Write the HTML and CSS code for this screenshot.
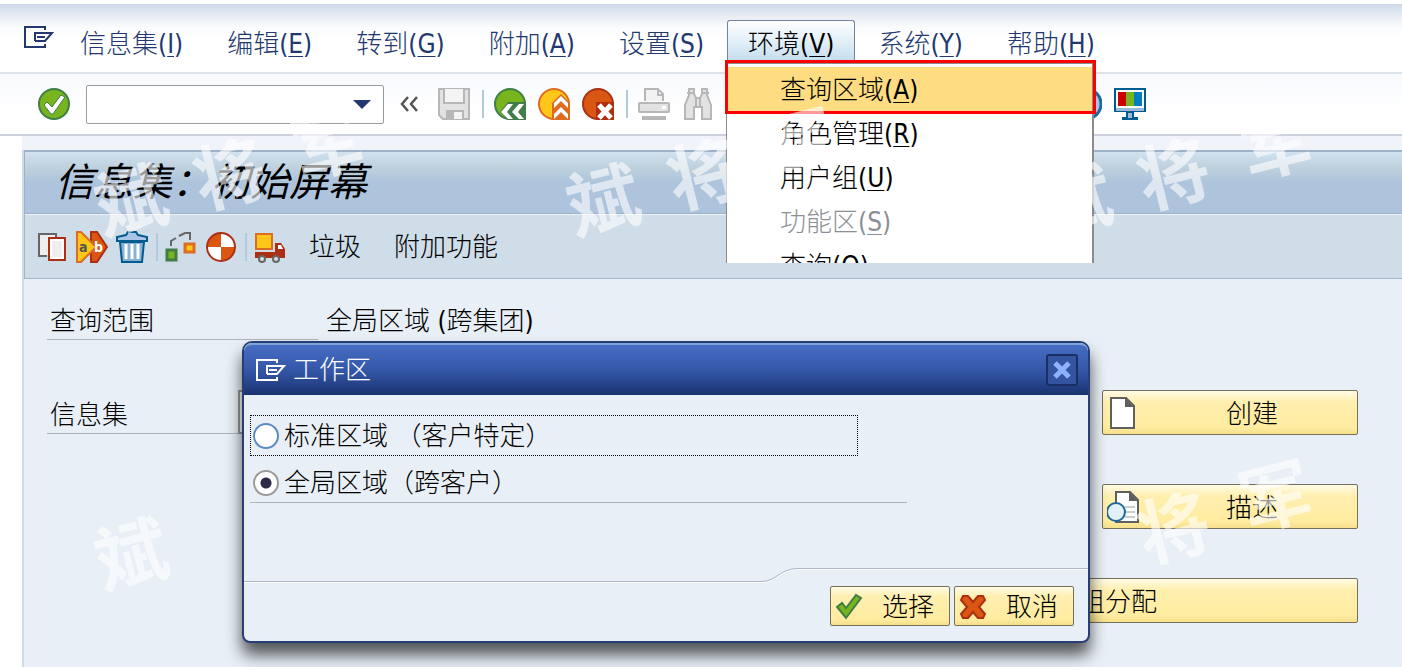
FILE: index.html
```
<!DOCTYPE html>
<html lang="zh-CN">
<head>
  <meta charset="UTF-8">
  <meta name="viewport" content="width=device-width, initial-scale=1.0">
  <title>信息集：初始屏幕</title>
  <link rel="stylesheet" href="styles.css">
</head>
<body>

<nav class="menubar">
  <svg class="menu-icon" width="30" height="22" viewBox="0 0 30 22" fill="none" stroke="#22386f" stroke-width="2"><path d="M21 4V1H1v20h20v-3M11 15V7h17l-7 8h-10M21 11h-8"/></svg>
  <a href="#">信息集(<u>I</u>)</a>
  <a href="#">编辑(<u>E</u>)</a>
  <a href="#">转到(<u>G</u>)</a>
  <a href="#">附加(<u>A</u>)</a>
  <a href="#">设置(<u>S</u>)</a>
  <div class="menu-open">
    <a href="#" class="active">环境(<u>V</u>)</a>
    <div class="dropdown">
      <a href="#" class="selected">查询区域(<u>A</u>)</a>
      <a href="#">角色管理(<u>R</u>)</a>
      <a href="#">用户组(<u>U</u>)</a>
      <a href="#" class="disabled">功能区(<u>S</u>)</a>
      <a href="#">查询(<u>Q</u>)</a>
    </div>
    <div class="marker"></div>
  </div>
  <a href="#">系统(<u>Y</u>)</a>
  <a href="#">帮助(<u>H</u>)</a>
</nav>

<div class="toolbar">
  <button class="icon" aria-label="确认"><svg viewBox="0 0 32 32"><circle cx="16" cy="16" r="15" fill="#78b41e" stroke="#3f7d49" stroke-width="2"/><path d="M6 17l3-3 5 5L23 7l4 2-12 17h-2z" fill="#fff" stroke="#3f7d49" stroke-width="1"/></svg></button>
  <div class="command">
    <input type="text" aria-label="命令">
    <button aria-label="历史"><svg width="18" height="10" viewBox="0 0 18 10"><path d="M0 1h18L9 10z" fill="#22386f"/></svg></button>
  </div>
  <button class="icon" aria-label="收起"><svg viewBox="0 0 32 32" fill="none" stroke="#555" stroke-width="2.500"><path d="M14 9l-6 7 6 7M23 9l-6 7 6 7"/></svg></button>
  <button class="icon" aria-label="保存"><svg viewBox="0 0 32 32" fill="#e2e2e2" stroke="#b7b7b7" stroke-width="2"><path d="M1 1h30v30H5l-4-4z"/><path d="M6 1v14h20V1" fill="#f4f4f4"/><path d="M9 31v-8h16v8" fill="#f4f4f4"/><path d="M11 25h4v6h-4z" fill="#b7b7b7"/></svg></button>
  <span class="sep"></span>
  <button class="icon" aria-label="返回"><svg viewBox="0 0 32 32"><circle cx="16" cy="16" r="15" fill="#78b41e" stroke="#3f7d49" stroke-width="2"/><path d="M14 14h18v18H14l-8-8z" fill="#3f7d49"/><path d="M19 16h-5l-7 8 7 7h5l-6-7zM30 16h-5l-7 8 7 7h5l-6-7z" fill="#fff"/></svg></button>
  <button class="icon" aria-label="退出"><svg viewBox="0 0 32 32"><circle cx="16" cy="16" r="15" fill="#ffc61a" stroke="#dd6b20" stroke-width="2"/><path d="M14 15l9-9 9 9v17H14z" fill="#dd6b20"/><path d="M23 8l-7 7v5l7-7 7 7v-5zM23 19l-7 7v5l7-7 7 7v-5z" fill="#fff"/></svg></button>
  <button class="icon" aria-label="取消"><svg viewBox="0 0 32 32"><circle cx="16" cy="16" r="15" fill="#d95713" stroke="#ad2e13" stroke-width="2"/><path d="M14 14h18v18H14z" fill="#ad2e13"/><path d="M17 17l12 13M29 17L17 30" stroke="#fff" stroke-width="5"/></svg></button>
  <span class="sep"></span>
  <button class="icon" aria-label="打印"><svg viewBox="0 0 32 32" fill="#f2f2f2" stroke="#b7b7b7" stroke-width="2"><path d="M7 13V1h13l5 5v7M20 1v6h5"/><rect x="1" y="15" width="30" height="9" rx="1" fill="#e2e2e2"/><path d="M24 18h4v3h-4z" fill="#fff" stroke="none"/><path d="M4 30h24" stroke-width="4"/></svg></button>
  <button class="icon" aria-label="查找"><svg viewBox="0 0 32 32" fill="#e2e2e2" stroke="#b7b7b7" stroke-width="2"><path d="M7 1h5v5l2 4h4l2-4V1h5v6l4 10v14h-9V19h-8v12H3V17L7 7zM14 10v9M18 10v9M5 5h8M19 5h8"/></svg></button>
  <button class="icon far" aria-label="帮助"><svg viewBox="0 0 32 32"><circle cx="16" cy="16" r="15" fill="#a9c4e4" stroke="#1d6a9a" stroke-width="3"/></svg></button>
  <button class="icon" aria-label="布局"><svg viewBox="0 0 32 32"><path d="M1 1h30v22H1z" fill="#fff" stroke="#005c8f" stroke-width="2"/><path d="M2 20h28v3H2z" fill="#9dbbd6"/><path d="M4 4h8v14H4z" fill="#c00"/><path d="M12 4h8v14h-8z" fill="#78b41e"/><path d="M20 4h8v14h-8z" fill="#007dc3"/><path d="M12 24h8v5h4v3H8v-3h4z" fill="#005c8f"/><path d="M14 25h4v5h-4z" fill="#9dbbd6"/></svg></button>
</div>

<main class="content">
  <h1>信息集：初始屏幕</h1>

  <div class="app-toolbar">
    <button class="icon" aria-label="复制"><svg viewBox="0 0 32 32" stroke-width="2"><path d="M11 25H3V3h17v4" fill="#eee" stroke="#666"/><path d="M13 7h16v22H13z" fill="#eee" stroke="#ad2e13"/><path d="M15 9h12v18H15z" fill="none" stroke="#fff"/></svg></button>
    <button class="icon" aria-label="重命名"><svg viewBox="0 0 32 32"><path d="M15 1h6l10 15-10 15h-6z" fill="#d95713" stroke="#ad2e13" stroke-width="2"/><path d="M1 1h4l15 15L5 31H1z" fill="#ffc61a" stroke="#dd6b20" stroke-width="2"/><text x="3" y="21" font-size="14" font-weight="700" fill="#555">a</text><text x="18" y="21" font-size="14" font-weight="700" fill="#fff">b</text></svg></button>
    <button class="icon" aria-label="删除"><svg viewBox="0 0 32 32" fill="#a9c4e4" stroke="#005c8f" stroke-width="2"><path d="M1 10V6l9-2 2-3h8l2 3 9 2v4z"/><path d="M4 11h24l-2 20H6z" fill="#89b1d7"/><path d="M10 13v15M16 13v15M22 13v15" stroke="#fff" stroke-width="3"/></svg></button>
    <span class="sep"></span>
    <button class="icon" aria-label="结构"><svg viewBox="0 0 32 32" stroke-width="3"><path d="M6 15v-5l5-3M14 5l6-3h5v7" fill="none" stroke="#666" stroke-width="2"/><path d="M2 19h9v10H2z" fill="#78b41e" stroke="#3f7d49"/><path d="M20 13h9v8h-9z" fill="#ffc61a" stroke="#dd6b20"/></svg></button>
    <button class="icon" aria-label="生成"><svg viewBox="0 0 32 32"><circle cx="16" cy="16" r="14" fill="#d95713"/><path d="M16 16V2a14 14 0 0 1 14 14zM16 16v14A14 14 0 0 1 2 16z" fill="#fff"/><circle cx="16" cy="16" r="14" fill="none" stroke="#ad2e13" stroke-width="2"/></svg></button>
    <span class="sep"></span>
    <button class="icon" aria-label="传输"><svg viewBox="0 0 32 32"><path d="M1 21h20v-9h6l4 6v9H1z" fill="#ad2e13"/><path d="M24 14h3l2 4h-5z" fill="#fff"/><path d="M2 3h16v15H2z" fill="#ffc61a" stroke="#dd6b20" stroke-width="2"/><circle cx="8" cy="28" r="3" fill="#ddd" stroke="#666" stroke-width="2"/><circle cx="22" cy="28" r="3" fill="#ddd" stroke="#666" stroke-width="2"/></svg></button>
    <button class="text">垃圾</button>
    <button class="text">附加功能</button>
  </div>

  <form class="fields">
    <div class="row">
      <span class="label">查询范围</span>
      <span class="value">全局区域 (跨集团)</span>
    </div>
    <div class="row">
      <label class="label short" for="infoset">信息集</label>
      <input type="text" id="infoset">
      <button type="button" class="btn wide">
        <svg width="34" height="34" viewBox="0 0 34 34"><path d="M4 1h15l8 8v22H4z" fill="#fff" stroke="#5f5f5f" stroke-width="2"/><path d="M18 1l9 9h-9z" fill="#5f5f5f"/></svg>
        <span>创建</span>
      </button>
    </div>
    <div class="row">
      <button type="button" class="btn wide">
        <svg width="34" height="34" viewBox="0 0 34 34"><path d="M9 1h14l8 8v22H9z" fill="#fff" stroke="#5f5f5f" stroke-width="2"/><path d="M22 1l9 9h-9z" fill="#5f5f5f"/><path d="M18 16h10M18 21h10M18 26h10" stroke="#ccc" stroke-width="2"/><circle cx="9" cy="21" r="9" fill="#e4f0f8" stroke="#1d6a9a" stroke-width="2"/></svg>
        <span>描述</span>
      </button>
    </div>
    <div class="row">
      <button type="button" class="btn assign">组分配</button>
    </div>
  </form>
</main>

<div class="dialog" role="dialog" aria-labelledby="dialogTitle">
  <div class="dialog-head">
    <svg width="30" height="22" viewBox="0 0 30 22" fill="none" stroke="#fff" stroke-width="2"><path d="M21 4V1H1v20h20v-3M11 15V7h17l-7 8h-10M21 11h-8"/></svg>
    <h2 id="dialogTitle">工作区</h2>
    <button class="close" aria-label="关闭"><svg width="18" height="18" viewBox="0 0 18 18"><path d="M2 2l14 14M16 2L2 16" stroke="#8fb2ff" stroke-width="5"/></svg></button>
  </div>
  <div class="options">
    <label class="option focused"><input type="radio" name="area">标准区域 （客户特定）</label>
    <label class="option"><input type="radio" name="area" checked>全局区域（跨客户）</label>
  </div>
  <div class="divider">
    <span class="low"></span>
    <svg width="36" height="15" viewBox="0 0 36 15" fill="none"><path d="M0 14.500c14 0 18-13 36-13" stroke="#fff"/><path d="M0 13.500c14 0 18-13 36-13" stroke="#a9b6cc"/></svg>
    <span class="high"></span>
  </div>
  <div class="actions">
    <button class="btn"><svg width="28" height="28" viewBox="0 0 28 28"><path d="M2 14l5-4 4 5L21 2l5 3-15 20z" fill="#78b41e" stroke="#3f7d49" stroke-width="2"/></svg><span>选择</span></button>
    <button class="btn"><svg width="28" height="28" viewBox="0 0 28 28"><path d="M4 3h5l5 6 5-6h5l2 4-6 7 6 7-2 4h-5l-5-6-5 6H4l-2-4 6-7-6-7z" fill="#d95713" stroke="#ad2e13" stroke-width="2"/></svg><span>取消</span></button>
  </div>
</div>

<div class="watermarks" aria-hidden="true">
  <span class="r1 c1">斌</span><span class="r2 c2">将</span><span class="r3 c3">军</span>
  <span class="r1 c4">斌</span><span class="r2 c5">将</span><span class="r3 c6">军</span>
  <span class="r1 c7">斌</span><span class="r2 c8">将</span><span class="r3 c9">军</span>
  <span class="r4 c1">斌</span><span class="r5 c8">将</span><span class="r6 c9">军</span>
</div>

</body>
</html>
```
FILE: styles.css
```
* {
  box-sizing: border-box;
}
body {
  margin: 0;
  min-height: 100vh;
  display: flex;
  flex-direction: column;
  position: relative;
  overflow: hidden;
  background: #fff;
  color: #000;
  font-family: "DejaVu Sans Condensed", "Noto Sans CJK SC", sans-serif;
  font-size: 26px;
  font-weight: 300;
  line-height: 32px;
}
a {
  color: inherit;
  text-decoration: none;
}
u {
  text-underline-offset: 3px;
  text-decoration-thickness: 1px;
}
button, input {
  font: inherit;
  color: inherit;
}
button {
  padding: 0;
  border: none;
  background: none;
  cursor: pointer;
  white-space: nowrap;
}
svg {
  display: block;
  flex: none;
}

/* menu bar */
.menubar {
  display: flex;
  align-items: flex-start;
  gap: 2px;
  height: 74px;
  padding: 20px 0 0 24px;
  border-bottom: 2px solid #dde2e9;
  background: linear-gradient(#fff 4px, #cddae9 4px, #e4eaf2 14px, #fbfcfd 28px, #fff 40px);
  color: #22386f;
}
.menu-icon {
  margin: 6px 3px 0 0;
}
.menubar a {
  height: 42px;
  padding: 8px 21px 0;
  white-space: nowrap;
}
.menu-open {
  position: relative;
}
.menubar .active {
  display: block;
  padding: 7px 20px 0;
  border: 1px solid #71839f;
  border-bottom: none;
  border-radius: 3px 3px 0 0;
  background: linear-gradient(#fff, #e1eff8 50%, #c4dcec);
  color: #000;
}
.dropdown {
  position: absolute;
  z-index: 2;
  top: 42px;
  left: -1px;
  width: 368px;
  height: 201px;
  padding-top: 3px;
  overflow: hidden;
  border: solid #8c8c8c;
  border-width: 2px 2px 0 1px;
  background: #fff;
  color: #000;
}
.dropdown a {
  display: block;
  height: 44px;
  padding: 7px 0 0 53px;
}
.dropdown .selected {
  background: #fddc82;
}
.dropdown .disabled {
  color: #8b9096;
}
.marker {
  position: absolute;
  z-index: 3;
  top: 40px;
  left: -2px;
  width: 371px;
  height: 54px;
  border: 3px solid #fe0000;
}

/* icon rows */
.icon svg {
  width: 32px;
  height: 32px;
}
.sep {
  width: 2px;
  height: 28px;
  margin-right: -1px;
  background: #b0cae0;
}
.toolbar {
  display: flex;
  align-items: center;
  gap: 12px;
  height: 62px;
  padding-left: 38px;
  border-bottom: 2px solid #ccd0dd;
  background: linear-gradient(#f7f9fd, #fff 60%);
}
.toolbar .sep {
  margin: 0 -2px 0 0;
}
.command {
  display: flex;
  align-items: center;
  width: 298px;
  height: 39px;
  margin: 0 -2px 0 4px;
  padding-right: 12px;
  border: 1px solid #999ca1;
  border-radius: 2px;
  background: #fff;
}
.command input {
  flex: 1;
  min-width: 0;
  border: none;
  background: none;
  outline: none;
}
.toolbar .far {
  margin-left: 344px;
}

/* screen */
.content {
  flex: 1;
  margin: 14px 0 0 22px;
  border-left: 2px solid #d2dae8;
  background: #e8eff6;
  box-shadow: 0 -14px 0 #f0f3fa;
}
h1 {
  margin: 0;
  height: 64px;
  padding: 7px 0 0 30px;
  border: solid #9db1c8;
  border-width: 2px 0 1px 1px;
  background: linear-gradient(#d2e2f0, #bed1dd 25%, #adc4dc 50%, #adc4dc);
  font-size: 39px;
  font-style: italic;
  font-weight: 400;
  line-height: 48px;
}
.app-toolbar {
  display: flex;
  align-items: center;
  gap: 8px;
  height: 65px;
  padding: 2px 0 0 11px;
  border: solid #a3b5c8;
  border-width: 0 0 1px 1px;
  box-shadow: inset 0 1px 0 #f0f4f8;
  background: #cfdde8;
}
.app-toolbar .text {
  margin: 0 10px 0 15px;
}
.fields {
  padding: 17px 44px 0 23px;
  display: flex;
  flex-direction: column;
  gap: 50px;
}
.row {
  display: flex;
  height: 44px;
}
.label {
  width: 271px;
  padding: 9px 0 0 3px;
  border-bottom: 1px solid #b1b5b9;
}
.short {
  width: 191px;
}
.value {
  padding: 9px 0 0 8px;
}
.row input {
  width: 600px;
  border: 2px solid #999;
  background: #fff;
}
.btn {
  display: flex;
  align-items: center;
  width: 120px;
  height: 40px;
  padding: 2px 4px 0;
  border: 1px solid #756f5c;
  border-radius: 2px;
  background: linear-gradient(#fffbe6, #ffefb0 25%, #ffeca0 85%, #f5df8c);
}
.btn span {
  flex: 1;
  text-align: center;
}
.actions .btn span {
  padding-left: 8px;
}
.row .btn {
  height: 45px;
  margin-left: auto;
}
.row .wide {
  width: 256px;
}
.row .wide span {
  padding-left: 10px;
}
.row .assign {
  width: 560px;
  justify-content: flex-end;
  padding-right: 200px;
}

/* dialog */
.dialog {
  position: absolute;
  z-index: 4;
  top: 341px;
  left: 242px;
  width: 848px;
  border: 2px solid #263e75;
  border-radius: 10px 10px 8px 8px;
  background: #e8eff6;
  box-shadow: 0 12px 16px rgba(0, 0, 0, 0.65);
}
.dialog-head {
  display: flex;
  align-items: center;
  gap: 7px;
  height: 52px;
  padding: 0 10px 0 12px;
  border-top: 2px solid #7fa3d8;
  border-radius: 8px 8px 0 0;
  background: linear-gradient(#466dc4, #3354a4 55%, #1a3370);
  color: #fff;
}
.dialog-head h2 {
  margin: 0;
  font-size: 26px;
  font-weight: 300;
}
.close {
  display: flex;
  align-items: center;
  justify-content: center;
  width: 32px;
  height: 32px;
  margin-left: auto;
  border: 2px solid #1a2f66;
  border-radius: 3px;
  background: #34549f;
}
.options {
  height: 173px;
  padding: 20px 6px 0;
}
.option {
  display: flex;
  align-items: center;
  gap: 5px;
  width: 657px;
  height: 47px;
  padding: 8px 0 1px 3px;
  border-bottom: 1px solid #b1b5b9;
}
.option.focused {
  width: 608px;
  height: 41px;
  padding: 0 0 0 2px;
  border: 1px dotted #000;
}
.option input {
  appearance: none;
  width: 26px;
  height: 26px;
  margin: 0;
  border: 2px solid #5c8bc3;
  border-radius: 50%;
  background: #fff;
}
.option input:checked {
  border-color: #999;
  background: radial-gradient(#2b2b48 5px, #fff 6px);
}
.divider {
  display: flex;
  height: 15px;
}
.low {
  flex: 1;
  border-bottom: 1px solid #fff;
  box-shadow: inset 0 -1px 0 #a9b6cc;
}
.high {
  width: 290px;
  border-top: 1px solid #a9b6cc;
  box-shadow: inset 0 1px 0 #fff;
}
.actions {
  display: flex;
  justify-content: flex-end;
  gap: 4px;
  padding: 3px 14px 15px 0;
}

/* watermark */
.watermarks span {
  position: absolute;
  z-index: 5;
  color: rgba(255, 255, 255, 0.6);
  font-size: 72px;
  font-weight: 700;
  line-height: 80px;
  transform: rotate(-14deg);
  pointer-events: none;
}
.r1 { top: 162px; }
.r2 { top: 136px; }
.r3 { top: 106px; }
.r4 { top: 516px; }
.r5 { top: 490px; }
.r6 { top: 458px; }
.c1 { left: 96px; }
.c2 { left: 194px; }
.c3 { left: 292px; }
.c4 { left: 568px; }
.c5 { left: 668px; }
.c6 { left: 764px; }
.c7 { left: 1040px; }
.c8 { left: 1138px; }
.c9 { left: 1240px; }
```
